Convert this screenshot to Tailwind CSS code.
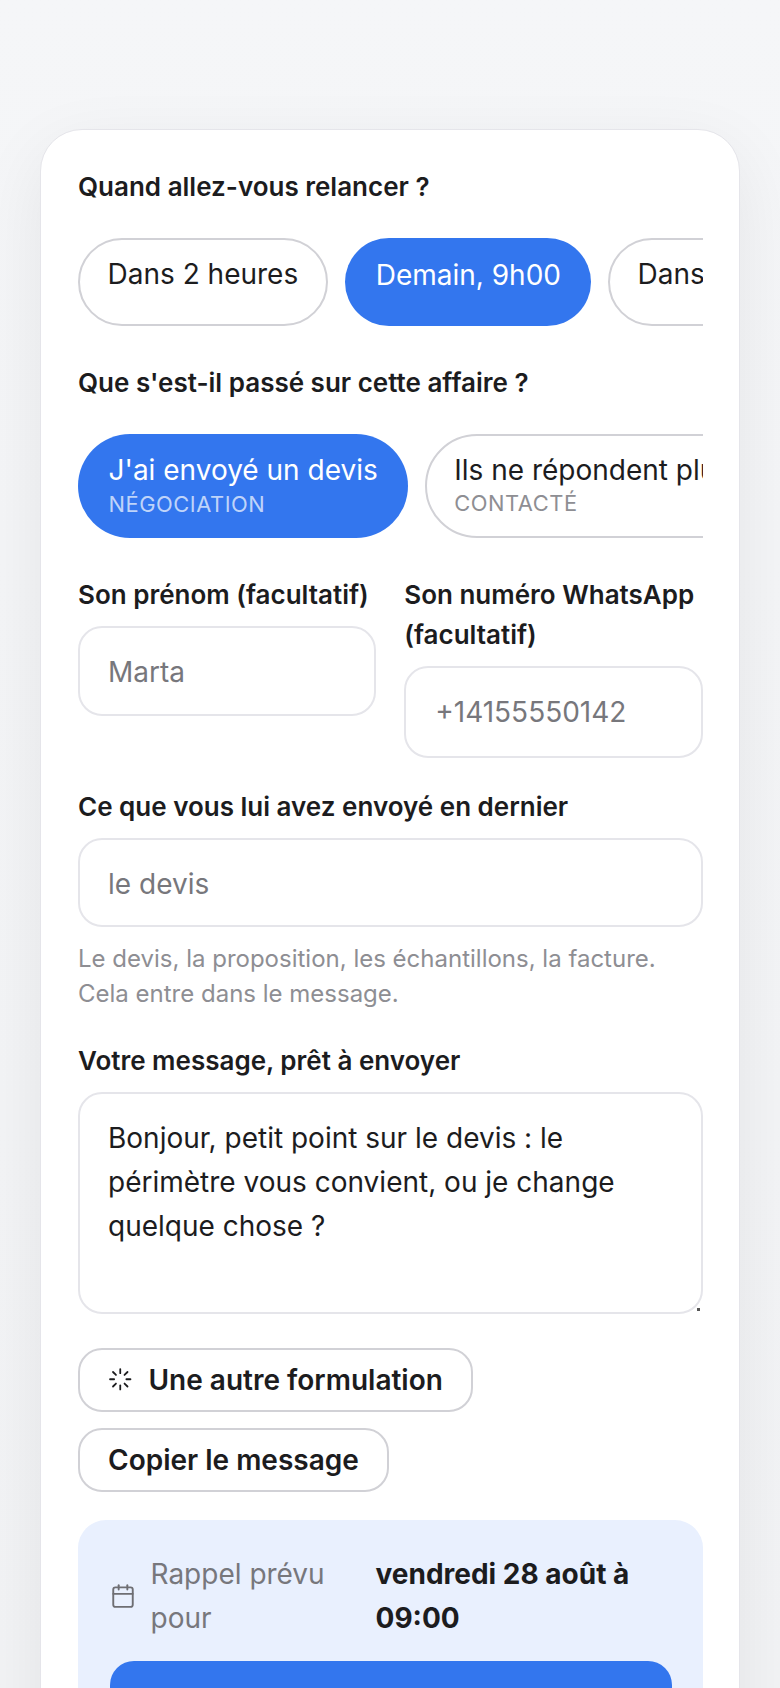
<!DOCTYPE html>
<html lang="fr" class="text-[28px]">
<head>
    <meta charset="UTF-8">
    <meta name="viewport" content="width=device-width, initial-scale=1.0">
    <title>Relance</title>
    <script src="https://cdn.jsdelivr.net/npm/@tailwindcss/browser@4"></script>
</head>
<body class="h-[1688px] overflow-hidden bg-gradient-to-b from-[#f5f6f8] to-[#f2f3f5] font-[Inter,sans-serif] text-[#1c1c1e]">
    <main class="mx-[40px] mt-[129px] rounded-3xl border-[1.75px] border-[#e5e5ea] bg-white pt-[36px] pr-[36.5px] pb-5 pl-[37px] shadow-[0_21px_70px_rgba(0,0,0,0.07)]">
        <!-- When -->
        <p class="mb-[30px] text-[26px] font-semibold leading-[42px]">Quand allez-vous relancer ?</p>
        <div class="flex gap-[17px] overflow-hidden">
            <button class="flex h-[88px] shrink-0 items-start rounded-full border-[2.6px] border-[#d1d1d6] pt-[12px] pr-[27.5px] pl-[27.5px] leading-[44px]">Dans 2 heures</button>
            <button class="flex h-[88px] shrink-0 items-start rounded-full bg-[#3376ee] pt-[15px] pr-[30px] pl-[31px] leading-[44px] text-white">Demain, 9h00</button>
            <button class="flex h-[88px] shrink-0 items-start rounded-full border-[2.6px] border-[#d1d1d6] pt-[12px] pr-[28.5px] pl-[27.5px] leading-[44px]">Dans 3 jours</button>
        </div>

        <!-- What happened -->
        <p class="mt-[36px] mb-[30px] text-[26px] font-semibold leading-[42px]">Que s'est-il passé sur cette affaire ?</p>
        <div class="flex gap-[17px] overflow-hidden">
            <button class="flex h-[104px] shrink-0 flex-col items-start rounded-full bg-[#3376ee] px-[30.5px] pt-[14px] text-white">
                <span class="leading-[44px]">J'ai envoyé un devis</span>
                <span class="text-[21.875px] leading-[24px] tracking-wide text-white/70">NÉGOCIATION</span>
            </button>
            <button class="flex h-[104px] shrink-0 flex-col items-start rounded-full border-[2.6px] border-[#d1d1d6] px-[27px] pt-[12px]">
                <span class="leading-[44px]">Ils ne répondent plus</span>
                <span class="text-[21.875px] leading-[23px] tracking-wide text-[#8e8e93]">CONTACTÉ</span>
            </button>
        </div>

        <!-- Contact -->
        <div class="mt-[37px] grid grid-cols-2 items-start gap-4">
            <div>
                <label class="mb-[11px] block text-[26px] font-semibold leading-[40px]">Son prénom (facultatif)</label>
                <input class="h-[90px] w-full rounded-[24px] border-[2.2px] border-[#e5e5ea] px-[28px] pt-[2px] outline-none placeholder:text-[#77777c]" placeholder="Marta">
            </div>
            <div>
                <label class="mb-1.5 block text-[26px] font-semibold leading-[40px]">Son numéro WhatsApp (facultatif)</label>
                <input class="h-[92px] w-full rounded-[24px] border-[2.2px] border-[#e5e5ea] px-[29px] outline-none placeholder:text-[#77777c]" placeholder="+14155550142">
            </div>
        </div>

        <div class="mt-[28px]">
            <label class="mb-1.5 block text-[26px] font-semibold leading-[42px]">Ce que vous lui avez envoyé en dernier</label>
            <input class="h-[89px] w-full rounded-[24px] border-[2.2px] border-[#e5e5ea] px-[28px] pt-[2px] outline-none placeholder:text-[#77777c]" placeholder="le devis">
            <p class="mt-[14px] text-[24px] leading-[35px] text-[#8e8e93]">Le devis, la proposition, les échantillons, la facture. Cela entre dans le message.</p>
        </div>

        <!-- Message -->
        <div class="mt-[29px]">
            <label class="mb-[9.5px] block text-[26px] font-semibold leading-[42px]">Votre message, prêt à envoyer</label>
            <div class="relative">
                <textarea class="block h-[222px] w-full resize-none rounded-[24px] border-[2.2px] border-[#e5e5ea] px-[28px] py-[22px] leading-[44.3px] outline-none">Bonjour, petit point sur le devis : le périmètre vous convient, ou je change quelque chose ?</textarea>
                <span class="absolute right-[3px] bottom-[3px] size-[2.5px] bg-[#555]"></span>
            </div>
        </div>

        <div class="mt-[34px] flex flex-col items-start gap-[16px]">
            <button class="flex h-[64px] items-center gap-[16px] rounded-[24px] border-[2.6px] border-[#d1d1d6] px-[28px] font-semibold">
                <svg class="size-[24.5px]" viewBox="0 0 24 24" fill="none" stroke="currentColor" stroke-width="1.75" stroke-linecap="round" stroke-linejoin="round"><path d="M12 2v4"/><path d="m16.2 7.8 2.9-2.9"/><path d="M18 12h4"/><path d="m16.2 16.2 2.9 2.9"/><path d="M12 18v4"/><path d="m4.9 19.1 2.9-2.9"/><path d="M2 12h4"/><path d="m4.9 4.9 2.9 2.9"/></svg>
                Une autre formulation
            </button>
            <button class="h-[64px] rounded-[24px] border-[2.6px] border-[#d1d1d6] px-[28px] font-semibold">Copier le message</button>
        </div>

        <!-- Reminder -->
        <section class="mt-[28px] rounded-[28px] bg-[#e9f0fe] pt-[32px] pr-[31px] pb-[31px] pl-[31.5px]">
            <div class="flex items-center">
                <svg class="mr-[15px] size-[26px] shrink-0 text-[#6e6e73]" viewBox="0 0 24 24" fill="none" stroke="currentColor" stroke-width="1.75" stroke-linecap="round" stroke-linejoin="round"><path d="M8 2v4"/><path d="M16 2v4"/><rect width="18" height="18" x="3" y="4" rx="2"/><path d="M3 10h18"/></svg>
                <span class="w-[208px] shrink-0 leading-[44px] text-[#77777c]">Rappel prévu pour</span>
                <strong class="ml-[17px] font-bold leading-[44px]">vendredi 28 août à 09:00</strong>
            </div>
            <button class="mt-[21px] h-[98px] w-full rounded-[24px] bg-[#3376ee] font-semibold text-white">Enregistrer le rappel</button>
        </section>
    </main>
</body>
</html>
